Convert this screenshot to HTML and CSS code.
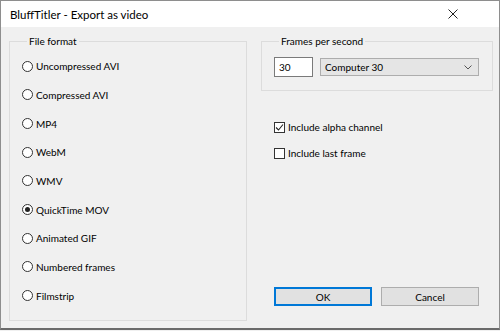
FILE: index.html
```html
<!DOCTYPE html>
<html lang="en">
<head>
  <meta charset="UTF-8" />
  <title>BluffTitler - Export as video</title>
  <link rel="stylesheet" href="styles.css">
</head>
<body>

  <div class="window">
    <div class="titlebar">
      <span class="title">BluffTitler - Export as video</span>
      <svg class="close" width="10" height="10" viewBox="0 0 10 10">
        <path d="M0.5 0.5 L9.5 9.5 M9.5 0.5 L0.5 9.5" stroke="#222" stroke-width="1" fill="none"/>
      </svg>
    </div>

    <div class="content">
      <fieldset class="group formats">
        <legend>File format</legend>
        <div class="option"><span class="radio"></span>Uncompressed AVI</div>
        <div class="option"><span class="radio"></span>Compressed AVI</div>
        <div class="option"><span class="radio"></span>MP4</div>
        <div class="option"><span class="radio"></span>WebM</div>
        <div class="option"><span class="radio"></span>WMV</div>
        <div class="option"><span class="radio checked"></span>QuickTime MOV</div>
        <div class="option"><span class="radio"></span>Animated GIF</div>
        <div class="option"><span class="radio"></span>Numbered frames</div>
        <div class="option"><span class="radio"></span>Filmstrip</div>
      </fieldset>

      <div class="side">
        <fieldset class="group fps">
          <legend>Frames per second</legend>
          <div class="fps-row">
            <div class="textbox">30</div>
            <div class="select">
              <span>Computer 30</span>
              <svg width="8" height="5" viewBox="0 0 8 5">
                <path d="M0.5 0.5 L4 4 L7.5 0.5" stroke="#555" stroke-width="1" fill="none"/>
              </svg>
            </div>
          </div>
        </fieldset>

        <div class="check-row first"><span class="checkbox">
          <svg width="9" height="9" viewBox="0 0 9 9">
            <path d="M1 4.5 L3.5 7 L8 1.5" stroke="#222" stroke-width="1.1" fill="none"/>
          </svg>
        </span>Include alpha channel</div>
        <div class="check-row"><span class="checkbox"></span>Include last frame</div>

        <div class="buttons">
          <button class="default">OK</button>
          <button>Cancel</button>
        </div>
      </div>
    </div>
  </div>

</body>
</html>
```

FILE: styles.css
```css
body {
  margin: 0;
  font-family: Lato, 'Open Sans', sans-serif;
  font-size: 10px;
  color: #000;
  background: #f0f0f0;
}

.window {
  width: 500px;
  height: 330px;
  box-sizing: border-box;
  border: 1px solid #8e8e8e;
  border-bottom: 2px solid #6a6a6a;
  background: #f0f0f0;
  display: flex;
  flex-direction: column;
}

.titlebar {
  height: 26px;
  flex: none;
  background: white;
  display: flex;
  justify-content: space-between;
  align-items: center;
  padding: 0 41px 0 9px;
}

.title {
  font-size: 11.5px;
}

.content {
  flex: 1;
  display: grid;
  grid-template-columns: 238px 232px;
  column-gap: 14px;
  padding: 7px 0 7px 8px;
}

.group {
  margin: 0;
  min-width: 0;
  border: 1px solid #dcdcdc;
  padding: 0;
}

legend {
  margin-left: 5px;
  padding: 0 2px;
  line-height: 14px;
}

.formats {
  padding: 4px 0 0 12px;
}

.option {
  height: 28.67px;
  display: flex;
  align-items: center;
}

.radio {
  width: 11px;
  height: 11px;
  box-sizing: border-box;
  border: 1px solid #333;
  border-radius: 50%;
  background: white;
  margin-right: 3px;
  display: flex;
  align-items: center;
  justify-content: center;
}

.radio.checked::after {
  content: '';
  width: 5px;
  height: 5px;
  border-radius: 50%;
  background: #222;
}

.side {
  display: flex;
  flex-direction: column;
  padding-bottom: 15px;
}

.fps {
  height: 57px;
  box-sizing: border-box;
  padding: 9px 0 0 12px;
}

.fps-row {
  display: flex;
  align-items: center;
  gap: 7px;
}

.textbox {
  width: 39px;
  height: 20px;
  box-sizing: border-box;
  border: 1px solid #7a7a7a;
  background: white;
  padding: 0 4px;
  line-height: 18px;
}

.select {
  width: 159px;
  height: 18px;
  box-sizing: border-box;
  border: 1px solid #adadad;
  background: #e5e5e5;
  display: flex;
  justify-content: space-between;
  align-items: center;
  padding: 0 6px 0 4px;
}

.check-row {
  height: 16px;
  display: flex;
  align-items: center;
  padding-left: 13px;
  margin-top: 10px;
}

.check-row.first {
  margin-top: 28px;
}

.checkbox {
  width: 11px;
  height: 11px;
  box-sizing: border-box;
  border: 1px solid #333;
  background: white;
  margin-right: 3px;
  display: flex;
  align-items: center;
  justify-content: center;
}

.buttons {
  margin-top: auto;
  padding-left: 13px;
  display: flex;
  gap: 9px;
}

button {
  width: 98px;
  height: 19px;
  box-sizing: border-box;
  border: 1px solid #adadad;
  background: #e1e1e1;
  font-family: inherit;
  font-size: 10px;
  color: #000;
  padding: 0;
}

button.default {
  border: 2px solid #0078d7;
}
```
